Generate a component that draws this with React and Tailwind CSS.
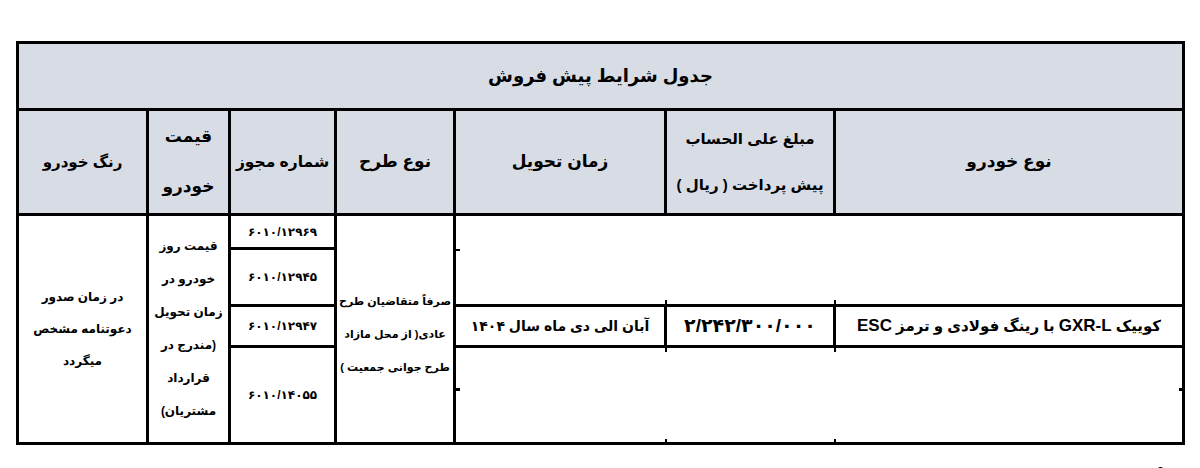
const CELL = 'border-[3px] border-black p-0 text-center align-middle font-bold whitespace-nowrap'

// little stubs left over from hidden borders in the source sheet
function Tick({ className }) {
  return <span className={`absolute bg-black ${className}`} />
}

export default function App() {
  return (
    <div className="min-h-[468px] w-full bg-white pt-[41px] pl-[16px] text-black font-['Liberation_Sans','DejaVu_Sans',sans-serif]">
      <table dir="rtl" className="w-[1166px] table-fixed border-collapse">
        <colgroup>
          <col className="w-[349px]" />
          <col className="w-[169px]" />
          <col className="w-[211px]" />
          <col className="w-[119px]" />
          <col className="w-[106px]" />
          <col className="w-[82px]" />
          <col className="w-[130px]" />
        </colgroup>
        <thead className="bg-[#d7dce5]">
          <tr className="h-[67px]">
            <th colSpan={7} className={`${CELL} text-[18px]`}>جدول شرایط پیش فروش</th>
          </tr>
          <tr className="h-[105px] text-[17px]">
            <th className={CELL}>نوع خودرو</th>
            <th className={`${CELL} text-[15px] leading-[46px]`}>
              مبلغ علی الحساب
              <br />
              پیش پرداخت ( ریال )
            </th>
            <th className={CELL}>زمان تحویل</th>
            <th className={CELL}>نوع طرح</th>
            <th className={`${CELL} text-[15.5px]`}>شماره مجوز</th>
            <th className={`${CELL} leading-[50px]`}>
              قیمت
              <br />
              خودرو
            </th>
            <th className={`${CELL} text-[15px]`}>رنگ خودرو</th>
          </tr>
        </thead>
        <tbody className="text-[12px]">
          <tr className="h-[34px]">
            <td colSpan={3} rowSpan={2} className={`${CELL} relative`}>
              <Tick className="left-0 top-[33px] h-[2px] w-[4px]" />
              <Tick className="bottom-0 left-[209px] h-[4px] w-[2px]" />
              <Tick className="bottom-0 left-[378px] h-[4px] w-[2px]" />
            </td>
            <td rowSpan={5} className={`${CELL} text-[11px] leading-[33px] pt-[10px]`}>
              صرفاً متقاضیان طرح
              <br />
              عادی( از محل مازاد
              <br />
              طرح جوانی جمعیت )
            </td>
            <td className={CELL}>۶۰۱۰/۱۲۹۶۹</td>
            <td rowSpan={5} className={`${CELL} leading-[33px]`}>
              قیمت روز
              <br />
              خودرو در
              <br />
              زمان تحویل
              <br />
              (مندرج در
              <br />
              قرارداد
              <br />
              مشتریان)
            </td>
            <td rowSpan={5} className={`${CELL} leading-[32px]`}>
              در زمان صدور
              <br />
              دعوتنامه مشخص
              <br />
              میگردد
            </td>
          </tr>
          <tr className="h-[57px]">
            <td className={CELL}>۶۰۱۰/۱۲۹۴۵</td>
          </tr>
          <tr className="h-[41px]">
            <td className={`${CELL} text-[15px]`}>
              کوییک <span className="text-[17px]">GXR-L</span> با رینگ فولادی و ترمز <span className="text-[17px]">ESC</span>
            </td>
            <td className={`${CELL} text-[19px]`}>۲/۲۴۲/۳۰۰/۰۰۰</td>
            <td className={`${CELL} text-[14px]`}>آبان الی دی ماه سال ۱۴۰۴</td>
            <td className={CELL}>۶۰۱۰/۱۲۹۴۷</td>
          </tr>
          <tr className="h-[43px]">
            <td colSpan={3} rowSpan={2} className={`${CELL} relative`}>
              <Tick className="top-0 left-[209px] h-[4px] w-[2px]" />
              <Tick className="top-0 left-[378px] h-[4px] w-[2px]" />
              <Tick className="left-0 top-[40px] h-[3px] w-[4px]" />
              <Tick className="right-0 top-[40px] h-[3px] w-[3px]" />
              <Tick className="bottom-0 left-[209px] h-[3px] w-[2px]" />
              <Tick className="bottom-0 left-[378px] h-[3px] w-[2px]" />
            </td>
            <td rowSpan={2} className={CELL}>۶۰۱۰/۱۴۰۵۵</td>
          </tr>
          <tr className="h-[54px]"></tr>
        </tbody>
      </table>
      <div className="ml-[1142px] mt-[22px] h-[4px] w-[5px] rounded-full bg-black" />
    </div>
  )
}
